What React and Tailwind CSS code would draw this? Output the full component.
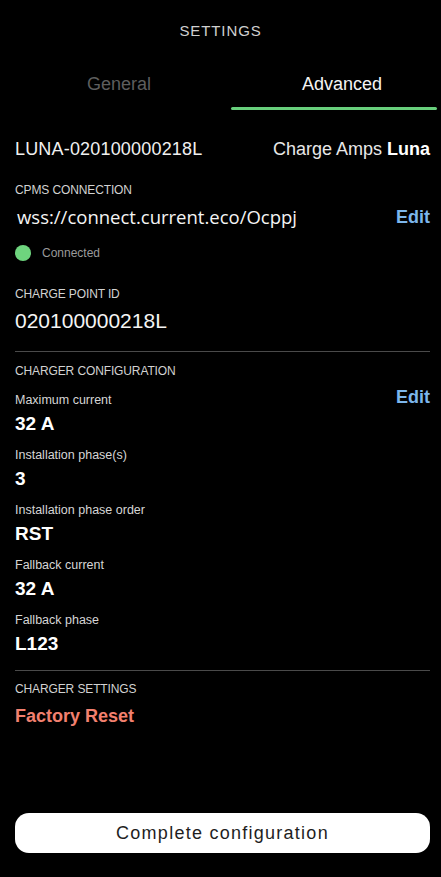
import React from 'react';

const fields = [
  { label: 'Maximum current', value: '32 A', edit: true },
  { label: 'Installation phase(s)', value: '3' },
  { label: 'Installation phase order', value: 'RST' },
  { label: 'Fallback current', value: '32 A' },
  { label: 'Fallback phase', value: 'L123' },
];

function SectionTitle({ children, className = '' }) {
  return (
    <div className={`h-[16px] text-[12px] leading-[16px] tracking-[-0.01em] text-[#d2d2d2] ${className}`}>{children}</div>
  );
}

export default function App() {
  return (
    <div className="min-h-[877px] w-full bg-black text-[#f2f2f2] font-['Liberation_Sans',Arial,sans-serif]">
      {/* header */}
      <div className="flex h-[62px] items-center justify-center text-[15px] tracking-[0.06em] text-[#d0d0d0]">SETTINGS</div>

      {/* tabs */}
      <div className="flex h-[48px]">
        <div className="flex w-[231px] flex-col">
          <div className="h-[45px] pl-[7px] text-center text-[18px] leading-[45px] text-[#5e5e5e]">General</div>
        </div>
        <div className="flex w-[206px] flex-col">
          <div className="h-[45px] pl-[16px] text-center text-[18px] leading-[45px] text-[#f4f4f4]">Advanced</div>
          <div className="h-[3px] rounded-full bg-[#68cf7c]" />
        </div>
      </div>

      <div className="pl-[15px] pr-[11px]">
        {/* device row */}
        <div className="mt-[27px] flex h-[24px] items-center justify-between text-[18px] leading-[24px]">
          <span className="tracking-[0.01em] text-[#f0f0f0]">LUNA-020100000218L</span>
          <span className="text-[#e8e8e8]">Charge Amps <span className="font-bold text-white">Luna</span></span>
        </div>

        {/* cpms */}
        <SectionTitle className="mt-[21px]">CPMS CONNECTION</SectionTitle>
        <div className="mt-[7px] flex h-[24px] items-center justify-between">
          <span className="pl-[2px] text-[18.5px] leading-[24px] text-[#f4f4f4] font-['Open_Sans',sans-serif]">wss://connect.current.eco/Ocppj</span>
          <span className="text-[18px] font-bold leading-[24px] text-[#7db6ec]">Edit</span>
        </div>
        <div className="mt-[14px] flex h-[20px] items-center gap-[11px]">
          <span className="h-[16px] w-[16px] rounded-full bg-[#6ed47e]" />
          <span className="text-[12px] text-[#9a9a9a]">Connected</span>
        </div>

        <SectionTitle className="mt-[23px]">CHARGE POINT ID</SectionTitle>
        <div className="mt-[6px] h-[26px] text-[21px] leading-[26px] text-[#f4f4f4]">020100000218L</div>

        <div className="mt-[17px] h-px bg-[#4a4a4a]" />

        <SectionTitle className="mt-[11px]">CHARGER CONFIGURATION</SectionTitle>

        {fields.map((f, i) => (
          <div key={f.label} className={i === 0 ? 'mt-[13px]' : 'mt-[11px]'}>
            <div className="flex h-[16px] items-center justify-between">
              <span className="text-[12.5px] leading-[16px] text-[#d6d6d6]">{f.label}</span>
              {f.edit && <span className="relative -top-[3px] text-[18px] font-bold leading-[22px] text-[#7db6ec]">Edit</span>}
            </div>
            <div className="mt-[4px] h-[24px] text-[19px] font-bold leading-[24px] text-white">{f.value}</div>
          </div>
        ))}

        <div className="mt-[14px] h-px bg-[#4a4a4a]" />

        <SectionTitle className="mt-[10px]">CHARGER SETTINGS</SectionTitle>
        <div className="mt-[7px] h-[24px] text-[18px] font-bold leading-[24px] text-[#f2806f]">Factory Reset</div>

        <button className="mt-[85px] flex h-[40px] w-full items-center justify-center rounded-[14px] bg-white text-[18px] tracking-[0.07em] text-[#1e1e1e]">
          Complete configuration
        </button>
      </div>
    </div>
  );
}
